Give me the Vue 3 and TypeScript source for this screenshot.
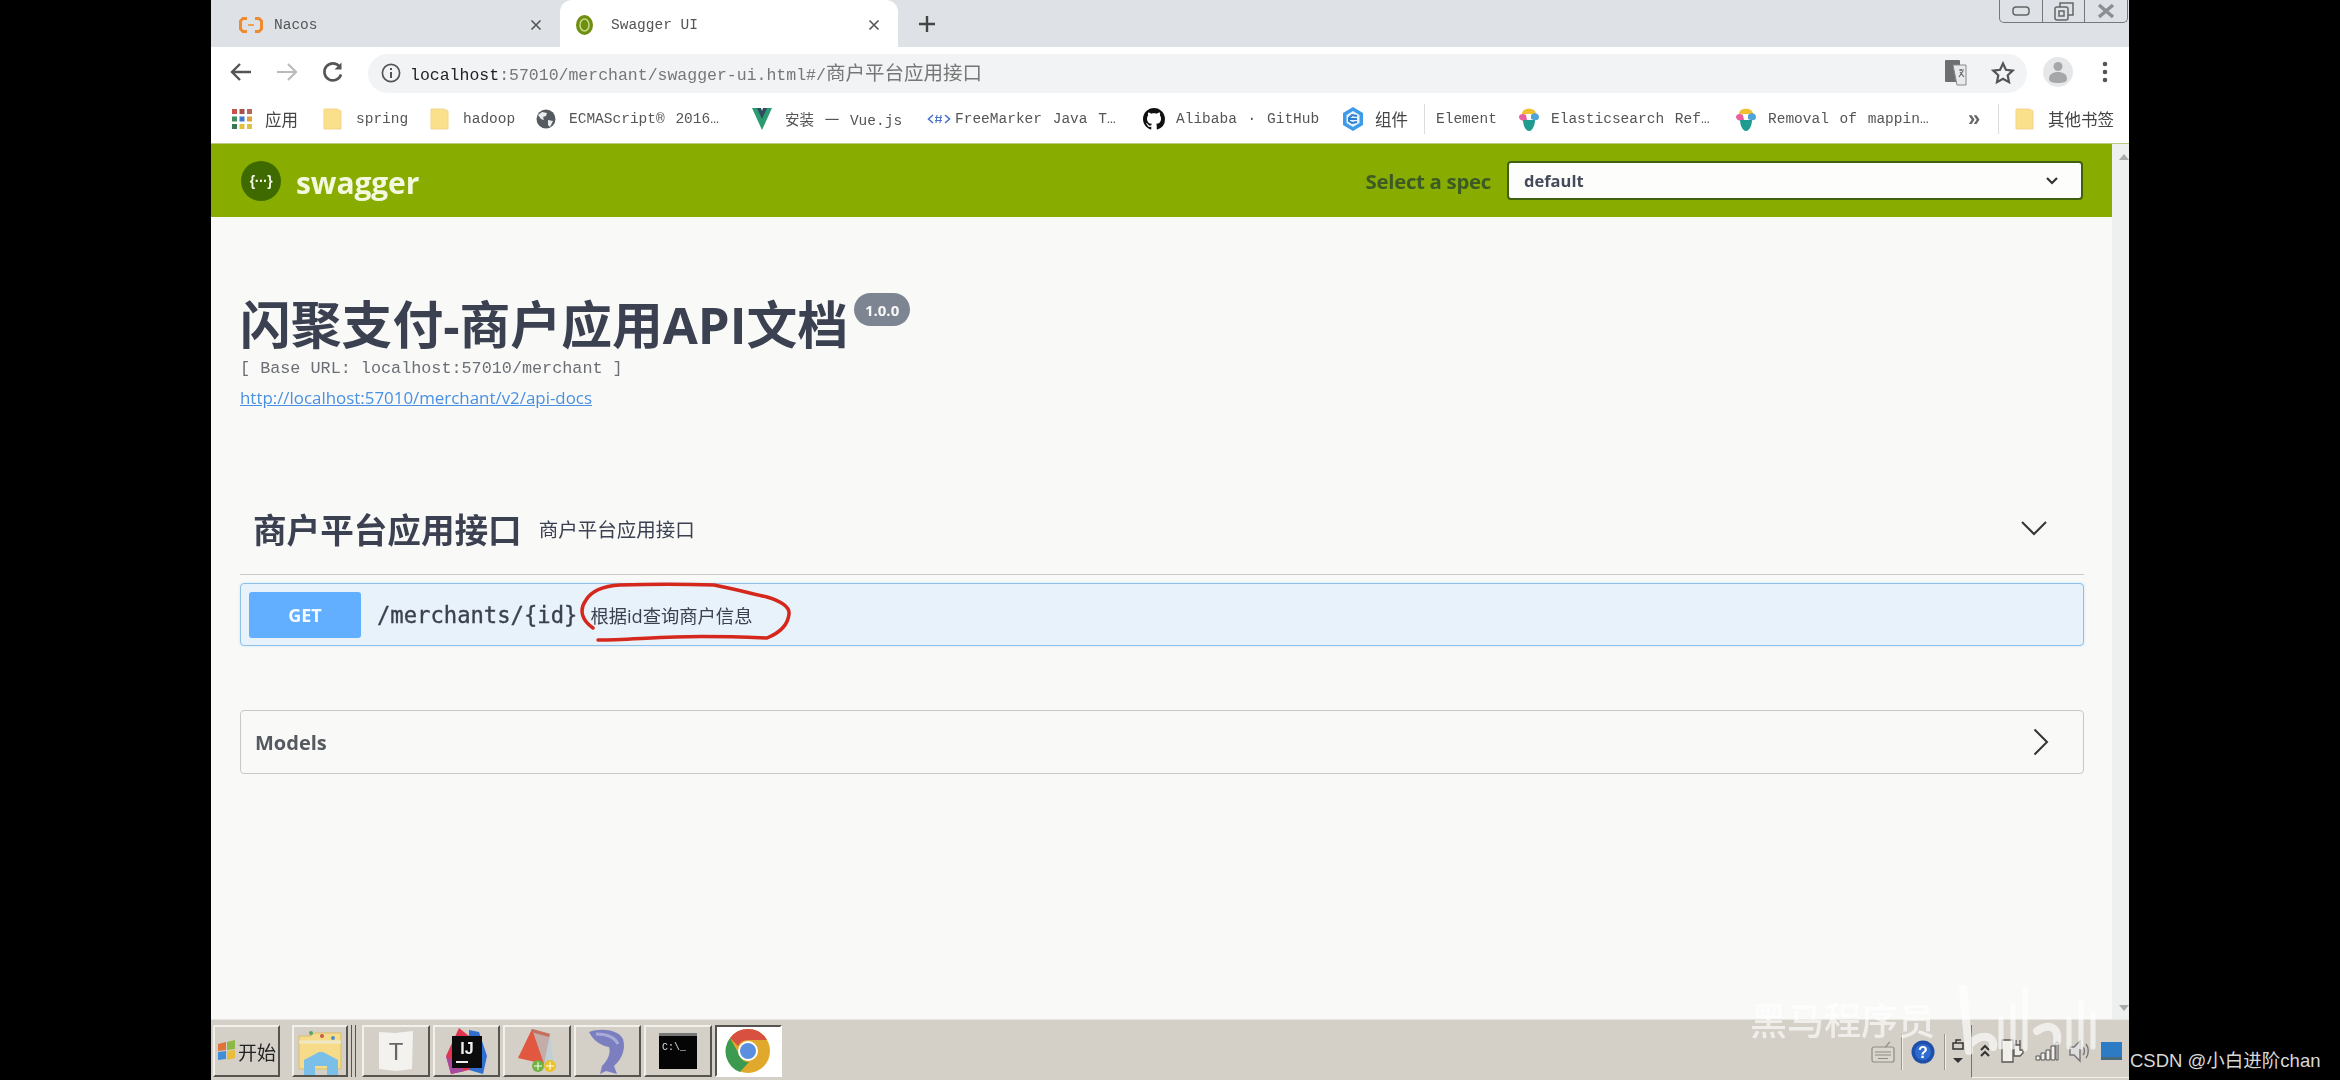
<script setup lang="ts">
interface Bookmark {
  icon: string
  text: string
  width: number
  cjk?: boolean
}

const bookmarks: Bookmark[] = [
  { icon: 'apps', text: '应用', width: 91, cjk: true },
  { icon: 'folder', text: 'spring', width: 107 },
  { icon: 'folder', text: 'hadoop', width: 106 },
  { icon: 'globe', text: 'ECMAScript® 2016…', width: 216 },
  { icon: 'vue', text: '安装 一 Vue.js', width: 175 },
  { icon: 'ftl', text: 'FreeMarker Java T…', width: 216 },
  { icon: 'github', text: 'Alibaba · GitHub', width: 199 },
  { icon: 'elem', text: '组件', width: 82, cjk: true },
  { icon: 'sep', text: '', width: 12 },
  { icon: '', text: 'Element', width: 82 },
  { icon: 'es', text: 'Elasticsearch Ref…', width: 217 },
  { icon: 'es', text: 'Removal of mappin…', width: 233 },
  { icon: 'more', text: '', width: 30 },
  { icon: 'sep', text: '', width: 17 },
  { icon: 'folder', text: '其他书签', width: 100, cjk: true },
]
</script>

<template>
  <div class="page">
    <div class="screen">
      <!-- tabs -->
      <div class="tabstrip">
        <div class="tab tab-nacos">
          <svg class="tab-icon nacos" width="24" height="16" viewBox="0 0 24 16" fill="none" stroke="#ef8a2e" stroke-width="3">
            <path d="M8 1.500H4L1.500 4v8L4 14.500h4M16 1.500h4L22.500 4v8L20 14.500h-4" />
            <path d="M9 8h6" stroke-width="1.500" />
          </svg>
          <span class="tab-title">Nacos</span>
          <svg class="tab-close" width="12" height="12" viewBox="0 0 12 12" stroke="#555" stroke-width="1.600"><path d="M1.500 1.500l9 9M10.500 1.500l-9 9" /></svg>
        </div>
        <div class="tab tab-active">
          <svg class="tab-icon" width="17" height="20" viewBox="0 0 17 20">
            <ellipse cx="8.500" cy="10" rx="8.500" ry="10" fill="#6f8f10" />
            <ellipse cx="8.500" cy="10" rx="4.500" ry="6" fill="none" stroke="#c7d98a" stroke-width="1.500" />
          </svg>
          <span class="tab-title">Swagger UI</span>
          <svg class="tab-close" width="12" height="12" viewBox="0 0 12 12" stroke="#555" stroke-width="1.600"><path d="M1.500 1.500l9 9M10.500 1.500l-9 9" /></svg>
        </div>
        <svg class="new-tab" width="18" height="18" viewBox="0 0 18 18" stroke="#444" stroke-width="2.400"><path d="M9 1v16M1 9h16" /></svg>
        <div class="win-controls">
          <div class="win-btn">
            <svg width="18" height="10" viewBox="0 0 18 10" fill="none" stroke="#666" stroke-width="1.500"><rect x="1" y="1" width="16" height="8" rx="3" /></svg>
          </div>
          <div class="win-btn">
            <svg width="20" height="20" viewBox="0 0 20 20" fill="none" stroke="#666" stroke-width="1.500"><rect x="1" y="6" width="13" height="13" rx="2" /><path d="M6 6V2h13v12h-5" /><rect x="5" y="10" width="5" height="5" /></svg>
          </div>
          <div class="win-btn">
            <svg width="20" height="16" viewBox="0 0 20 16" stroke="#8b8f94" stroke-width="3.500"><path d="M3 2l14 12M17 2L3 14" /></svg>
          </div>
        </div>
      </div>

      <!-- toolbar -->
      <div class="toolbar">
        <svg class="nav" width="24" height="24" viewBox="0 0 24 24" fill="none" stroke="#555" stroke-width="2.400"><path d="M22 12H3M11 4l-8 8 8 8" /></svg>
        <svg class="nav" width="24" height="24" viewBox="0 0 24 24" fill="none" stroke="#bbb" stroke-width="2.200"><path d="M2 12h19M13 4l8 8-8 8" /></svg>
        <svg class="nav" width="24" height="24" viewBox="0 0 24 24" fill="none" stroke="#555" stroke-width="2.600"><path d="M20 14.500A8.500 8.500 0 1 1 18.500 6.500" /><path d="M20.500 2.500v7h-7" fill="#555" stroke="none" /></svg>
        <div class="omnibox">
          <svg width="20" height="20" viewBox="0 0 20 20" fill="none" stroke="#555" stroke-width="1.700"><circle cx="10" cy="10" r="8.600" /><path d="M10 9v6M10 5v2" stroke-width="2" /></svg>
          <span class="url"><b>localhost</b>:57010/merchant/swagger-ui.html#/<span class="url-cjk">商户平台应用接口</span></span>
          <div class="omni-right">
            <svg width="22" height="26" viewBox="0 0 22 26">
              <rect x="0" y="0" width="15" height="22" rx="1" fill="#6d6f72" />
              <path d="M8 5h13v20H12z" fill="#e9eaeb" stroke="#888" />
              <path d="M14 10h5M16 9v2M14 17l4-6M15 12l4 5" stroke="#666" fill="none" stroke-width="1.200" />
            </svg>
            <svg width="24" height="24" viewBox="0 0 24 24" fill="none" stroke="#555" stroke-width="2.200"><path d="M12 2.500l2.900 6.300 6.800.8-5 4.700 1.300 6.800-6-3.400-6 3.400 1.300-6.800-5-4.700 6.800-.8z" /></svg>
          </div>
        </div>
        <div class="avatar">
          <svg width="30" height="30" viewBox="0 0 30 30"><circle cx="15" cy="9.500" r="4.500" fill="#a5a7a9" /><path d="M6 22c0-5 4-7 9-7s9 2 9 7c0 3-4 4-9 4s-9-1-9-4z" fill="#a5a7a9" /></svg>
        </div>
        <svg class="dots" width="6" height="22" viewBox="0 0 6 22" fill="#555"><circle cx="3" cy="3" r="2.300" /><circle cx="3" cy="11" r="2.300" /><circle cx="3" cy="19" r="2.300" /></svg>
      </div>

      <!-- bookmarks -->
      <div class="bookmarks">
        <div
          v-for="(b, i) in bookmarks"
          :key="i"
          class="bm"
          :style="{ width: b.width + 'px' }"
        >
          <div v-if="b.icon && b.icon !== 'sep' && b.icon !== 'more'" class="bm-icon" :class="{ 'bm-icon-ftl': b.icon === 'ftl' }">
            <svg v-if="b.icon === 'apps'" width="20" height="20" viewBox="0 0 20 20">
              <rect x="0" y="0" width="5" height="5" fill="#c8554c" /><rect x="7.500" y="0" width="5" height="5" fill="#a5524a" /><rect x="15" y="0" width="5" height="5" fill="#b5675d" />
              <rect x="0" y="7.500" width="5" height="5" fill="#3f8f5d" /><rect x="7.500" y="7.500" width="5" height="5" fill="#3d79c9" /><rect x="15" y="7.500" width="5" height="5" fill="#e2a23b" />
              <rect x="0" y="15" width="5" height="5" fill="#357a50" /><rect x="7.500" y="15" width="5" height="5" fill="#e4c23f" /><rect x="15" y="15" width="5" height="5" fill="#dfc045" />
            </svg>
            <svg v-else-if="b.icon === 'folder'" width="19" height="22" viewBox="0 0 19 22">
              <path d="M1 1h13l4 2v18H1z" fill="#fbe08c" stroke="#f1d589" />
            </svg>
            <svg v-else-if="b.icon === 'globe'" width="20" height="20" viewBox="0 0 20 20">
              <circle cx="10" cy="10" r="9.500" fill="#555b60" />
              <path d="M6 3l5 1-1 3-3 1 1 3-3-1-3-4zM12 11l5 1-3 6-2-2z" fill="#eceded" />
            </svg>
            <svg v-else-if="b.icon === 'vue'" width="20" height="24" viewBox="0 0 20 24">
              <path d="M0 1h7l3 6 3-6h7L10 23z" fill="#2c9b70" />
              <path d="M5 1h4l1 3 1-3h4l-5 11z" fill="#2f495e" />
            </svg>
            <svg v-else-if="b.icon === 'ftl'" width="24" height="14" viewBox="0 0 24 14" fill="none" stroke="#4a72c9" stroke-width="1.600">
              <path d="M6 3L1.500 7 6 11M18 3l4.500 4-4.500 4" />
              <path d="M10 3l-1 8M14 3l-1 8M8 5.500h7M8 8.500h7" stroke-width="1.100" />
            </svg>
            <svg v-else-if="b.icon === 'github'" width="22" height="22" viewBox="0 0 16 16" fill="#111">
              <path d="M8 0C3.580 0 0 3.580 0 8c0 3.540 2.290 6.530 5.470 7.590.4.070.55-.17.55-.38 0-.19-.01-.82-.01-1.490-2.010.37-2.530-.49-2.690-.94-.09-.23-.48-.94-.82-1.130-.28-.15-.68-.52-.01-.53.630-.01 1.080.58 1.230.82.720 1.210 1.870.87 2.330.66.070-.52.280-.87.510-1.070-1.780-.2-3.640-.89-3.640-3.950 0-.87.310-1.590.820-2.150-.08-.2-.36-1.020.08-2.120 0 0 .67-.21 2.200.82.640-.18 1.320-.27 2-.27s1.360.09 2 .27c1.530-1.040 2.200-.82 2.200-.82.440 1.100.16 1.920.08 2.120.51.560.82 1.270.82 2.150 0 3.070-1.870 3.750-3.650 3.950.29.250.54.730.54 1.480 0 1.070-.01 1.930-.01 2.200 0 .21.150.46.550.38A8.010 8.010 0 0 0 16 8c0-4.420-3.580-8-8-8z" />
            </svg>
            <svg v-else-if="b.icon === 'elem'" width="22" height="26" viewBox="0 0 22 26">
              <path d="M11 1l10 6v12l-10 6-10-6V7z" fill="#3d9be9" />
              <path d="M11 5l6.500 4v8L11 21l-6.500-4V9z" fill="#e7f3fd" />
              <path d="M15 10l-5-1-3 3v3l3 2 5-1M8 13h7" fill="none" stroke="#2d7fd0" stroke-width="2" />
            </svg>
            <svg v-else width="22" height="26" viewBox="0 0 22 26">
              <path d="M4 8c0-7 14-7 14 0z" fill="#f0c02f" />
              <path d="M1 11c0-3 4-4 7-2l1 5c-3 2-8 0-8-3z" fill="#e8609d" />
              <path d="M13 9c3-3 8-2 8 2s-4 4-8 2z" fill="#4fa5d8" />
              <path d="M5 14h12c0 4-2 11-6 11s-6-7-6-11z" fill="#1f9b8f" />
            </svg>
          </div>
          <span v-if="b.icon === 'sep'" class="bm-sep"></span>
          <span v-else-if="b.icon === 'more'" class="bm-more">»</span>
          <span v-else class="bm-text" :class="{ 'bm-cjk': b.cjk }">{{ b.text }}</span>
        </div>
      </div>

      <!-- page -->
      <div class="viewport">
        <div class="doc">
          <header class="topbar">
            <div class="brand">
              <div class="brand-logo">{···}</div>
              <span class="brand-name">swagger</span>
            </div>
            <div class="spec">
              <label class="spec-label">Select a spec</label>
              <div class="spec-select">
                <span>default</span>
                <svg width="14" height="10" viewBox="0 0 14 10" fill="none" stroke="#333" stroke-width="2.200"><path d="M2 2l5 5 5-5" /></svg>
              </div>
            </div>
          </header>

          <div class="wrapper">
            <div class="info">
              <div class="title-row">
                <h2 class="title">闪聚支付-商户应用API文档</h2>
                <span class="version">1.0.0</span>
              </div>
              <pre class="base-url">[ Base URL: localhost:57010/merchant ]</pre>
              <a class="docs-link">http://localhost:57010/merchant/v2/api-docs</a>
            </div>

            <div class="tag-head">
              <h4 class="tag-title">商户平台应用接口</h4>
              <small class="tag-desc">商户平台应用接口</small>
              <svg class="tag-arrow" width="26" height="15" viewBox="0 0 26 15" fill="none" stroke="#333" stroke-width="2"><path d="M1 1l12 12L25 1" /></svg>
            </div>

            <div class="opblock">
              <span class="method">GET</span>
              <span class="path">/merchants/{id}</span>
              <span class="summary">根据id查询商户信息</span>
              <svg class="scribble" width="230" height="70" viewBox="0 0 230 70" fill="none" stroke="#d5271b" stroke-width="3.500" stroke-linecap="round">
                <path d="M18 47C8 40 3 30 11 19C17 9 28 5 45 4C75 3 110 3 139 4C160 8 178 13 192 16C205 20 215 26 214 33C213 44 204 52 192 57C165 56 130 55 100 56C70 57 45 59 23 59" />
              </svg>
            </div>

            <div class="models">
              <span class="models-title">Models</span>
              <svg width="16" height="28" viewBox="0 0 16 28" fill="none" stroke="#333" stroke-width="2"><path d="M1.500 1.500L14 14 1.500 26.500" /></svg>
            </div>
          </div>
        </div>
        <div class="scrollbar">
          <span class="sb-up"></span>
          <span class="sb-down"></span>
        </div>
      </div>

      <!-- windows taskbar -->
      <div class="taskbar">
        <div class="task-btn task-start">
          <svg width="20" height="24" viewBox="0 0 20 24">
            <path d="M1 5l8-2v8l-8 1z" fill="#e0733a" /><path d="M10 3l8-2v9l-8 1z" fill="#8cb845" />
            <path d="M1 13l8-1v8l-8 1z" fill="#3f8ed8" /><path d="M10 12l8-1v8l-8 2z" fill="#e6bd3c" />
          </svg>
          <span>开始</span>
        </div>
        <div class="task-btn task-explorer">
          <svg width="46" height="50" viewBox="0 0 46 50">
            <path d="M2 10h12l3-3h27v36H2z" fill="#f6dc8a" stroke="#d9bd6a" />
            <path d="M2 16h42" stroke="#efe8c7" stroke-width="3" />
            <circle cx="14" cy="7" r="2" fill="#5aa35a" /><circle cx="25" cy="10" r="2" fill="#c75a4b" /><circle cx="36" cy="12" r="2" fill="#4a8fc9" />
            <path d="M7 49V34l15-8h4l15 8v15H30V40H18v9z" fill="#79bfe8" />
          </svg>
        </div>
        <div class="task-btn">
          <svg width="40" height="44" viewBox="0 0 40 44">
            <path d="M3 3l16 1 18-2-1 38-16 2-17-2z" fill="#f3f2ee" />
            <text x="20" y="31" text-anchor="middle" font-family="Liberation Sans, sans-serif" font-size="24" fill="#666">T</text>
          </svg>
        </div>
        <div class="task-btn">
          <svg width="46" height="50" viewBox="0 0 46 50">
            <path d="M3 30L16 2l10 8v34l-18 4z" fill="#e0344f" />
            <path d="M26 4l10 2 8 24-4 18-14-4z" fill="#2f6fd0" />
            <path d="M3 30l5 18 14-3z" fill="#a64aa0" />
            <rect x="9" y="10" width="30" height="32" fill="#0c0c0c" />
            <text x="24" y="28" text-anchor="middle" font-family="Liberation Sans, sans-serif" font-weight="700" font-size="16" fill="#f0f0f0">IJ</text>
            <rect x="13" y="35" width="12" height="2" fill="#eee" />
          </svg>
        </div>
        <div class="task-btn">
          <svg width="46" height="50" viewBox="0 0 46 50">
            <path d="M18 3l18 5-6 30-26-6z" fill="#e2573f" />
            <path d="M18 3l18 5 4 32-10-2z" fill="#b8d0d6" opacity=".7" />
            <path d="M18 3l18 5-1 3-18-5z" fill="#c56f5f" />
            <circle cx="24" cy="40" r="6" fill="#6fb240" /><circle cx="36" cy="40" r="6" fill="#eac22b" />
            <path d="M24 36v8M20 40h8M36 36v8M32 40h8" stroke="#fff" stroke-width="1" />
          </svg>
        </div>
        <div class="task-btn">
          <svg width="46" height="50" viewBox="0 0 46 50">
            <path d="M5 6C16 2 34 3 39 13c3 10-1 20-9 27l3 8-11-3-6 3 2-8c6-6 9-13 7-19C19 20 10 16 5 6z" fill="#7b7fc0" />
            <path d="M12 8c8 0 18 2 22 10" stroke="#a9acd9" stroke-width="3" fill="none" />
          </svg>
        </div>
        <div class="task-btn">
          <svg width="44" height="44" viewBox="0 0 44 44">
            <rect x="3" y="4" width="38" height="36" fill="#050505" />
            <rect x="3" y="4" width="38" height="3" fill="#777" />
            <text x="6" y="21" font-family="Liberation Mono, monospace" font-size="10" fill="#ddd">C:\_</text>
          </svg>
        </div>
        <div class="task-btn task-chrome">
          <svg width="46" height="46" viewBox="0 0 46 46">
            <circle cx="23" cy="23" r="22" fill="#e0a92b" />
            <path d="M23 1a22 22 0 0 1 19 11H23a11 11 0 0 0-10 6L5 10A22 22 0 0 1 23 1z" fill="#d8503f" />
            <path d="M5 10l10 18a9 9 0 0 0 9 6l-9 10A22 22 0 0 1 5 10z" fill="#3b9a4f" />
            <circle cx="23" cy="23" r="10" fill="#fff" />
            <circle cx="23" cy="23" r="8" fill="#5a8fe0" />
          </svg>
        </div>

        <div class="tray">
          <svg class="tray-kb" width="24" height="22" viewBox="0 0 24 22" fill="none" stroke="#8d8b84" stroke-width="1.200">
            <rect x="1" y="6" width="22" height="15" rx="2" fill="#d9d6ce" /><path d="M4 11h16M4 14h16M7 17.500h10M14 6c2 0 2-3 5-5" />
          </svg>
          <span class="tray-sep"></span>
          <svg class="tray-help" width="24" height="24" viewBox="0 0 24 24">
            <circle cx="12" cy="12" r="11.500" fill="#1f4fa8" /><circle cx="12" cy="12" r="8" fill="#2f6bd0" />
            <text x="12" y="18" text-anchor="middle" font-family="Liberation Sans, sans-serif" font-weight="700" font-size="16" fill="#fff">?</text>
          </svg>
          <span class="tray-sep"></span>
          <svg width="14" height="30" viewBox="0 0 14 30" fill="none" stroke="#333" stroke-width="1.500">
            <rect x="2" y="6" width="10" height="6" /><path d="M5 6V3h5" /><path d="M2 21h10l-5 5z" fill="#333" stroke="none" />
          </svg>
          <div class="tray-clock">
            <svg width="12" height="14" viewBox="0 0 12 14" fill="none" stroke="#333" stroke-width="2"><path d="M2 6l4-4 4 4M2 12l4-4 4 4" /></svg>
            <svg width="26" height="28" viewBox="0 0 26 28" fill="#f1efe8" stroke="#555" stroke-width="1.300">
              <path d="M2 3h11v22H2z" /><path d="M14 8h6v5h3v3l-3 3h-6z" /><path d="M16 8V3M20 8V3" />
            </svg>
            <svg width="24" height="20" viewBox="0 0 24 20" fill="#f1efe8" stroke="#555"><path d="M1 15h4v4H1zM6 12h4v7H6zM11 9h4v10h-4zM16 5h4v14h-4zM21 1h2v18h-2z" /></svg>
            <svg width="24" height="24" viewBox="0 0 24 24" fill="none" stroke="#777" stroke-width="1.400"><path d="M2 8h4l6-6v20l-6-6H2z" fill="#ddd" /><path d="M15 8c2 2 2 6 0 8M18 5c3 4 3 10 0 14" /></svg>
            <svg width="21" height="18" viewBox="0 0 21 18"><rect x="0" y="0" width="21" height="15" fill="#2c7bc4" /><rect x="0" y="15" width="21" height="3" fill="#4a6a7a" /></svg>
          </div>
        </div>
      </div>

      <!-- video watermark -->
      <div class="watermark">
        <span>黑马程序员</span>
        <svg width="160" height="72" viewBox="0 0 160 72" fill="none" stroke="#fff" stroke-width="8" stroke-linecap="round">
          <path d="M14 4l6 62M20 60c14-14 26-8 24 2" />
          <path d="M52 34v28M64 20v42M76 4v60" stroke-width="5" />
          <path d="M88 46c12-8 22-4 20 10" />
          <path d="M120 34v28M132 18v44M144 28v34" stroke-width="5" />
        </svg>
      </div>
    </div>
    <div class="csdn">CSDN @小白进阶chan</div>
  </div>
</template>

<style>
html,
body {
  margin: 0;
  background: #000;
}
</style>

<style scoped>
.page {
  position: relative;
  width: 2340px;
  height: 1080px;
  background: #000;
  overflow: hidden;
  padding-left: 211px;
  box-sizing: border-box;
  font-family: "Open Sans", "Noto Sans CJK SC", sans-serif;
}

.screen {
  position: relative;
  width: 1918px;
  height: 1080px;
  display: flex;
  flex-direction: column;
  filter: blur(0.6px);
}

/* tabs */
.tabstrip {
  height: 47px;
  flex: none;
  display: flex;
  align-items: center;
  background: #dee1e6;
}

.tab {
  height: 47px;
  display: flex;
  align-items: center;
  box-sizing: border-box;
  padding-top: 2px;
}

.tab-nacos {
  width: 349px;
  padding-left: 28px;
}

.tab-active {
  width: 338px;
  padding-left: 16px;
  background: #fff;
  border-radius: 12px 12px 0 0;
}

.tab-icon {
  margin-right: 18px;
}

.nacos {
  margin-right: 11px;
}

.tab-title {
  font: 14.5px "Liberation Mono", monospace;
  color: #555;
}

.tab-close {
  margin-left: auto;
  margin-right: 18px;
}

.new-tab {
  margin-left: 20px;
}

.win-controls {
  margin-left: auto;
  margin-right: 1px;
  align-self: flex-start;
  width: 129px;
  height: 23px;
  display: flex;
  box-sizing: border-box;
  border: 1px solid #73787e;
  border-top: 0;
  border-radius: 0 0 5px 5px;
}

.win-btn {
  flex: 1;
  display: flex;
  align-items: center;
  justify-content: center;
  border-left: 1px solid #73787e;
}

.win-btn:first-child {
  border-left: 0;
}

/* toolbar */
.toolbar {
  height: 49px;
  flex: none;
  display: flex;
  align-items: center;
  padding-left: 18px;
  gap: 22px;
  background: #fff;
}

.nav {
  flex: none;
}

.omnibox {
  width: 1659px;
  height: 39px;
  margin-top: 3px;
  margin-left: 1px;
  flex: none;
  display: flex;
  align-items: center;
  gap: 9px;
  padding: 0 12px 0 13px;
  box-sizing: border-box;
  background: #f1f3f4;
  border-radius: 20px;
}

.url {
  font: 16.5px "Liberation Mono", "Noto Sans CJK SC", monospace;
  color: #777;
  white-space: nowrap;
}

.url b {
  font-weight: 400;
  color: #222;
}

.url-cjk {
  font-family: "Noto Sans CJK SC", sans-serif;
  font-size: 19.5px;
  line-height: 1;
}

.omni-right {
  margin-left: auto;
  display: flex;
  align-items: center;
  gap: 24px;
}

.avatar {
  width: 30px;
  height: 30px;
  margin-left: -6px;
  border-radius: 50%;
  background: #e6e7e8;
  flex: none;
}

.dots {
  margin-left: 7px;
  flex: none;
}

/* bookmarks */
.bookmarks {
  height: 47px;
  flex: none;
  display: flex;
  align-items: center;
  padding-left: 21px;
  padding-bottom: 2px;
  background: #fff;
  box-sizing: border-box;
}

.bm {
  flex: none;
  display: flex;
  align-items: center;
  white-space: nowrap;
}

.bm-icon {
  width: 33px;
  flex: none;
  display: flex;
  align-items: center;
}

.bm-icon-ftl {
  width: 28px;
}

.bm-text {
  font: 14.5px "Liberation Mono", "Noto Sans CJK SC", monospace;
  word-spacing: 2px;
  color: #555;
}

.bm-cjk {
  font: 16.5px "Noto Sans CJK SC", sans-serif;
  color: #444;
}

.bm-sep {
  width: 1px;
  height: 30px;
  background: #dcdcdc;
}

.bm-more {
  font: bold 22px "Liberation Sans", sans-serif;
  color: #666;
}

/* page */
.viewport {
  flex: 1;
  min-height: 0;
  display: flex;
  background: #f9faf8;
  border-top: 1px solid #b9cb7d;
}

.doc {
  flex: 1;
  min-width: 0;
}

.scrollbar {
  width: 17px;
  flex: none;
  background: #eef0ef;
  display: flex;
  flex-direction: column;
  justify-content: space-between;
  align-items: center;
  padding: 10px 0 8px;
  box-sizing: border-box;
}

.sb-up,
.sb-down {
  width: 0;
  height: 0;
  margin-left: 6px;
  border-left: 5px solid transparent;
  border-right: 5px solid transparent;
}

.sb-up {
  border-bottom: 6px solid #aaa;
}

.sb-down {
  border-top: 6px solid #aaa;
}

.topbar {
  height: 73px;
  display: flex;
  align-items: center;
  justify-content: space-between;
  padding: 0 29px 0 30px;
  background: #88ad00;
  box-sizing: border-box;
}

.brand {
  display: flex;
  align-items: center;
  gap: 15px;
}

.brand-logo {
  width: 40px;
  height: 40px;
  border-radius: 50%;
  background: #3f6a00;
  color: #f4f8e6;
  display: flex;
  align-items: center;
  justify-content: center;
  font: bold 14px "Liberation Sans", sans-serif;
  letter-spacing: -0.5px;
}

.brand-name {
  margin-top: 3px;
  font: bold 30px "Open Sans", sans-serif;
  color: #f3f8df;
  letter-spacing: -0.1px;
}

.spec {
  display: flex;
  align-items: center;
  gap: 16px;
}

.spec-label {
  font: bold 20.4px "Open Sans", sans-serif;
  color: #3c5a24;
  letter-spacing: -0.3px;
}

.spec-select {
  width: 576px;
  height: 39px;
  display: flex;
  align-items: center;
  justify-content: space-between;
  padding: 0 22px 0 15px;
  box-sizing: border-box;
  background: #fdfdfb;
  border: 2px solid #41600f;
  border-radius: 4px;
  font: bold 16.5px "Open Sans", sans-serif;
  color: #444b5a;
}

.wrapper {
  padding: 0 28px 0 29px;
}

.info {
  padding-top: 75px;
}

.title-row {
  display: flex;
  align-items: flex-start;
  gap: 6px;
}

.title {
  margin: 0;
  font: bold 50.8px/66px "Open Sans", "Noto Sans CJK SC", sans-serif;
  color: #3b4151;
}

.version {
  margin-top: 1px;
  width: 56px;
  height: 33px;
  display: flex;
  align-items: center;
  justify-content: center;
  border-radius: 17px;
  background: #7d8492;
  color: #f8f8f8;
  font: bold 15px "Open Sans", sans-serif;
}

.base-url {
  margin: 1px 0 0;
  font: 16.8px/20px "Liberation Mono", monospace;
  color: #6b6e75;
}

.docs-link {
  display: block;
  margin-top: 8px;
  font: 16.9px/22px "Open Sans", sans-serif;
  color: #4990e2;
  text-decoration: underline;
}

.tag-head {
  margin-top: 74px;
  height: 92px;
  display: flex;
  align-items: center;
  padding: 0 0 0 13px;
  box-sizing: border-box;
  border-bottom: 1px solid #c9cbca;
}

.tag-title {
  margin: 0;
  font: bold 33.6px/44px "Noto Sans CJK SC", sans-serif;
  color: #3b4151;
}

.tag-desc {
  margin-left: 17px;
  font: 19.5px/26px "Noto Sans CJK SC", sans-serif;
  color: #3b4151;
}

.tag-arrow {
  margin-left: auto;
  margin-right: 37px;
}

.opblock {
  position: relative;
  margin-top: 8px;
  height: 63px;
  display: flex;
  align-items: center;
  padding-left: 8px;
  box-sizing: border-box;
  background: #e8f2fa;
  border: 1.5px solid #8fc0e8;
  border-radius: 4px;
  box-shadow: 0 0 3px rgba(97, 175, 254, 0.3);
}

.method {
  width: 112px;
  height: 46px;
  flex: none;
  display: flex;
  align-items: center;
  justify-content: center;
  border-radius: 3px;
  background: #61affe;
  color: #f6fafe;
  font: bold 18px "Open Sans", sans-serif;
}

.path {
  margin-left: 16px;
  font: 22.2px "DejaVu Sans Mono", monospace;
  -webkit-text-stroke: 0.35px #3b4151;
  color: #3b4151;
}

.summary {
  margin-left: 13px;
  font: 18.3px "Open Sans", "Noto Sans CJK SC", sans-serif;
  color: #3b4151;
}

.scribble {
  position: absolute;
  left: 334px;
  top: -3px;
}

.models {
  margin-top: 64px;
  height: 64px;
  display: flex;
  align-items: center;
  justify-content: space-between;
  padding: 0 34px 0 14px;
  box-sizing: border-box;
  border: 1.5px solid #c8c9c7;
  border-radius: 4px;
}

.models-title {
  font: bold 20px "Open Sans", sans-serif;
  color: #555960;
}

/* taskbar */
.taskbar {
  height: 61px;
  flex: none;
  display: flex;
  gap: 3px;
  padding: 5px 0 3px 2px;
  box-sizing: border-box;
  background: #d4d0c8;
  border-top: 1px solid #e8e6e0;
}

.task-btn {
  width: 67.5px;
  flex: none;
  display: flex;
  align-items: center;
  justify-content: center;
  box-sizing: border-box;
  background: #d4d0c8;
  border: 2px solid;
  border-color: #f2f0ea #55544f #55544f #f2f0ea;
}

.task-start {
  width: 67px;
  margin-right: 9px;
  gap: 1px;
  font: 19px "Noto Sans CJK SC", sans-serif;
  color: #222;
}

.task-explorer {
  width: 56px;
  margin-right: 11px;
  box-shadow: 3px 0 0 #d4d0c8, 4px 0 0 #55544f, 7px 0 0 #d4d0c8, 8px 0 0 #55544f;
}

.task-chrome {
  background: #fff;
  border-color: #55544f #fff #fff #55544f;
}

.tray {
  margin-left: auto;
  height: 53px;
  display: flex;
  align-items: center;
  gap: 6px;
}

.tray-help {
  margin-left: 3px;
  margin-right: 3px;
}

.tray-sep {
  width: 1px;
  height: 36px;
  background: #9a978f;
  box-shadow: 1px 0 0 #f0eee8;
}

.tray-clock {
  height: 53px;
  width: 158px;
  padding-left: 7px;
  display: flex;
  align-items: center;
  gap: 9px;
  box-sizing: border-box;
  overflow: hidden;
  border-left: 1px solid #77756f;
  border-bottom: 1px solid #f2f0ea;
}

/* overlays */
.watermark {
  position: absolute;
  left: 1539px;
  top: 985px;
  display: flex;
  align-items: center;
  gap: 14px;
  opacity: 0.65;
}

.watermark span {
  font: 500 37px "Noto Sans CJK SC", sans-serif;
  color: #fff;
  margin-top: -4px;
}

.csdn {
  position: absolute;
  left: 2130px;
  top: 1048px;
  font: 18.5px/26px "Liberation Sans", "Noto Sans CJK SC", sans-serif;
  color: #d8d8d8;
  white-space: nowrap;
}
</style>
